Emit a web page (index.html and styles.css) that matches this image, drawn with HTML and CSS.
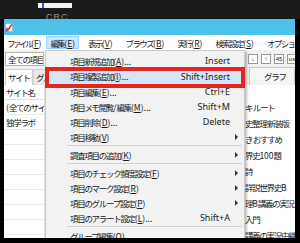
FILE: index.html
```html
<!DOCTYPE html>
<html lang="ja">
<head>
    <meta charset="UTF-8">
    <meta name="viewport" content="width=device-width, initial-scale=1.0">
    <title>編集メニュー</title>
    <link rel="stylesheet" href="styles.css">
</head>
<body>
    <div class="screen">
        <div class="desk-bar">
            <div class="desk-tab"><span class="desk-mark"></span></div>
            <div class="desk-title">CRC</div>
        </div>
        <div class="window">
            <div class="titlebar">
                <svg class="app-icon" width="8" height="9" viewBox="0 0 8 9">
                    <rect x="0.5" y="0.5" width="7" height="8" fill="#fff" stroke="#8aa" stroke-width="0.6"/>
                    <path d="M1.5 5 L3 7 L6.8 1.5" fill="none" stroke="#e0261d" stroke-width="1.4"/>
                    <rect x="0.5" y="6.5" width="2" height="2" fill="#2a62c9"/>
                </svg>
            </div>
            <div class="menubar">
                <span class="menu-item first"><span class="jp narrow">ファイル</span>(<u>F</u>)</span>
                <span class="menu-item active"><span class="jp">編集</span>(<u>E</u>)</span>
                <span class="menu-item"><span class="jp">表示</span>(<u>V</u>)</span>
                <span class="menu-item"><span class="jp">ブラウズ</span>(<u>B</u>)</span>
                <span class="menu-item"><span class="jp">実行</span>(<u>R</u>)</span>
                <span class="menu-item"><span class="jp">検索設定</span>(<u>S</u>)</span>
                <span class="menu-item"><span class="jp">オプション</span>(<u>O</u>)</span>
            </div>
            <div class="toolbar">
                <div class="combo jp">全ての項目</div>
                <div class="tool-buttons">
                    <span class="tool-btn">↓</span>
                    <span class="tool-btn">!</span>
                    <span class="tool-btn">45</span>
                    <span class="tool-btn">us</span>
                </div>
            </div>
            <div class="tabs">
                <div class="tab-group">
                    <span class="tab selected jp">サイト</span>
                    <span class="tab jp">グループ</span>
                </div>
                <span class="graph-btn jp">グラフ</span>
            </div>
            <div class="panes">
                <div class="site-list">
                    <div class="row head jp">サイト名</div>
                    <div class="row">(<span class="jp">全てのサイト</span>)</div>
                    <div class="row jp">独学ラボ</div>
                    <div class="row"></div>
                    <div class="row"></div>
                    <div class="row"></div>
                    <div class="row"></div>
                    <div class="row"></div>
                    <div class="row"></div>
                    <div class="row"></div>
                    <div class="row"></div>
                </div>
                <div class="middle"></div>
                <div class="item-list">
                    <div class="item head"></div>
                    <div class="item jp">キ ルート</div>
                    <div class="item jp">史整理 新装版</div>
                    <div class="item jp">き おすすめ</div>
                    <div class="item"><span class="jp">界史</span>100<span class="jp">題</span></div>
                    <div class="item jp">詩</div>
                    <div class="item"><span class="jp">詳説世界史</span>B</div>
                    <div class="item"><span class="jp">理</span>B<span class="jp">講義の実況</span></div>
                    <div class="item jp">入門</div>
                    <div class="item jp">講義の実況中継</div>
                </div>
            </div>

            <div class="dropdown">
                <div class="dd-item">
                    <span class="dd-label"><span class="jp">項目新規追加</span>(<u>A</u>)...</span>
                    <span class="dd-key">Insert</span><span></span>
                </div>
                <div class="dd-item current">
                    <span class="dd-label"><span class="jp">項目複製追加</span>(<u>I</u>)...</span>
                    <span class="dd-key">Shift+Insert</span><span></span>
                </div>
                <div class="dd-item">
                    <span class="dd-label"><span class="jp">項目編集</span>(<u>E</u>)...</span>
                    <span class="dd-key">Ctrl+E</span><span></span>
                </div>
                <div class="dd-item">
                    <span class="dd-label"><span class="jp">項目メモ閲覧</span>/<span class="jp">編集</span>(<u>M</u>)...</span>
                    <span class="dd-key">Shift+M</span><span></span>
                </div>
                <div class="dd-item">
                    <span class="dd-label"><span class="jp">項目削除</span>(<u>D</u>)...</span>
                    <span class="dd-key">Delete</span><span></span>
                </div>
                <div class="dd-item">
                    <span class="dd-label"><span class="jp">項目移動</span>(<u>V</u>)</span>
                    <span class="dd-key"></span><span class="arrow"></span>
                </div>
                <div class="dd-sep"></div>
                <div class="dd-item">
                    <span class="dd-label"><span class="jp">調査項目の追加</span>(<u>K</u>)</span>
                    <span class="dd-key"></span><span class="arrow"></span>
                </div>
                <div class="dd-sep"></div>
                <div class="dd-item">
                    <span class="dd-label"><span class="jp">項目のチェック頻度設定</span>(<u>F</u>)</span>
                    <span class="dd-key"></span><span class="arrow"></span>
                </div>
                <div class="dd-item">
                    <span class="dd-label"><span class="jp">項目のマーク設定</span>(<u>R</u>)</span>
                    <span class="dd-key"></span><span class="arrow"></span>
                </div>
                <div class="dd-item">
                    <span class="dd-label"><span class="jp">項目のグループ設定</span>(<u>P</u>)</span>
                    <span class="dd-key"></span><span class="arrow"></span>
                </div>
                <div class="dd-item">
                    <span class="dd-label"><span class="jp">項目のアラート設定</span>(<u>L</u>)...</span>
                    <span class="dd-key">Shift+A</span><span></span>
                </div>
                <div class="dd-sep"></div>
                <div class="dd-item">
                    <span class="dd-label"><span class="jp">グループ編集</span>(<u>O</u>)...</span>
                    <span class="dd-key"></span><span></span>
                </div>
            </div>
        </div>
    </div>
</body>
</html>
```

FILE: styles.css
```css
body {
    margin: 0;
    background: #000;
    font-family: "Noto Sans CJK JP", "Noto Sans", sans-serif;
    font-size: 8.5px;
    color: #1a1a1a;
}
.screen {
    width: 300px;
    height: 243px;
    overflow: hidden;
    background: #000;
}
.jp {
    letter-spacing: -1.3px;
}
u {
    text-decoration-thickness: 1px;
    text-underline-offset: 1px;
}

/* desktop strip above the window */
.desk-bar {
    height: 19px;
    background: #1b1b1b;
    overflow: hidden;
}
.desk-tab {
    margin: 3px 0 0 38px;
    width: 34px;
    height: 5px;
    background: #f4f4f4;
}
.desk-mark {
    display: block;
    margin-left: 4px;
    width: 2px;
    height: 5px;
    background: #2a5bd7;
}
.desk-title {
    margin: 5px 0 0 46px;
    color: #8d8d8d;
    font-family: "Liberation Sans", sans-serif;
    font-size: 9px;
    line-height: 9px;
    letter-spacing: 1px;
}

/* window */
.window {
    position: relative;
    margin: 0 5px 0 4px;
    height: 219px;
    background: #f0f0f0;
    overflow: hidden;
}
.titlebar {
    height: 16px;
    background: #4fc2ea;
    display: flex;
    align-items: center;
    padding-left: 1px;
}
.app-icon {
    display: block;
}
.menubar {
    height: 15px;
    background: #fff;
    display: flex;
    align-items: center;
    white-space: nowrap;
    margin-left: -1px;
}
.menubar .jp {
    letter-spacing: -1.6px;
}
.menubar .jp.narrow {
    letter-spacing: -2.5px;
}
.menu-item {
    height: 13px;
    line-height: 12px;
    padding: 0 3px;
    margin-right: 5px;
    border: 1px solid transparent;
    box-sizing: border-box;
}
.menu-item.first {
    margin-right: 1px;
}
.menu-item.active {
    background: #cce8ff;
    border-color: #99d1ff;
}

.toolbar {
    height: 17px;
    display: flex;
    justify-content: space-between;
    align-items: center;
    padding: 0 1px;
}
.combo {
    width: 39px;
    height: 14px;
    line-height: 13px;
    box-sizing: border-box;
    background: #fff;
    border: 1px solid #b5b5b5;
    padding-left: 2px;
    white-space: nowrap;
    overflow: hidden;
}
.tool-buttons {
    display: flex;
    gap: 3px;
    margin-right: -3px;
}
.tool-btn {
    width: 10px;
    height: 10px;
    box-sizing: border-box;
    border: 1px solid #9a9a9a;
    background: #fff;
    font-family: "Liberation Sans", sans-serif;
    font-size: 6px;
    line-height: 8px;
    text-align: center;
    overflow: hidden;
}

.tabs {
    height: 18px;
    display: flex;
    justify-content: space-between;
    align-items: flex-end;
}
.tab-group {
    display: flex;
    padding-left: 1px;
}
.tab {
    height: 16px;
    line-height: 15px;
    box-sizing: border-box;
    border: 1px solid #d0d0d0;
    border-bottom: none;
    padding: 0 3px 0 2px;
    background: #e8e8e8;
    white-space: nowrap;
}
.tab.selected {
    background: #fff;
    width: 28px;
}
.graph-btn {
    width: 46px;
    height: 18px;
    line-height: 17px;
    box-sizing: border-box;
    border: 1px solid #c9c9c9;
    border-bottom: none;
    background: #f5f5f5;
    padding-left: 14px;
}

.panes {
    display: grid;
    grid-template-columns: 41px 1fr 50px;
    height: 153px;
    background: #fff;
}
.site-list {
    overflow: hidden;
    white-space: nowrap;
    border-right: 1px solid #ddd;
}
.row {
    height: 15px;
    line-height: 15px;
    border-bottom: 1px solid #ececec;
    box-sizing: border-box;
    padding-left: 2px;
}
.row.head {
    border-bottom-color: #e0e0e0;
}
.item-list {
    overflow: hidden;
    white-space: nowrap;
}
.item {
    height: 16px;
    line-height: 16px;
}
.item.head {
    height: 14px;
}

/* Edit dropdown menu */
.dropdown {
    position: absolute;
    top: 31px;
    left: 41px;
    width: 200px;
    box-sizing: border-box;
    background: #f2f2f2;
    border: 1px solid #cccccc;
    padding: 2px 0;
    box-shadow: 2px 2px 2px rgba(0, 0, 0, 0.25);
    white-space: nowrap;
}
.dd-item {
    display: grid;
    grid-template-columns: 24px 1fr auto 14px;
    align-items: center;
    height: 15px;
}
.dd-item.current {
    position: relative;
    height: 16px;
    background: #d3e7f8;
}
.dd-item.current::after {
    content: "";
    position: absolute;
    left: -1px;
    right: -1px;
    top: -1px;
    bottom: -4px;
    border: 4px solid #e3261f;
}
.dd-label {
    grid-column: 2;
}
.dd-key {
    font-family: "Noto Sans", sans-serif;
    font-size: 9px;
    color: #222;
}
.arrow {
    width: 0;
    height: 0;
    margin-left: 5px;
    border-left: 3px solid #333;
    border-top: 3px solid transparent;
    border-bottom: 3px solid transparent;
}
.dd-sep {
    height: 1px;
    margin: 1px 2px 1px 21px;
    background: #d2d2d2;
}
```
